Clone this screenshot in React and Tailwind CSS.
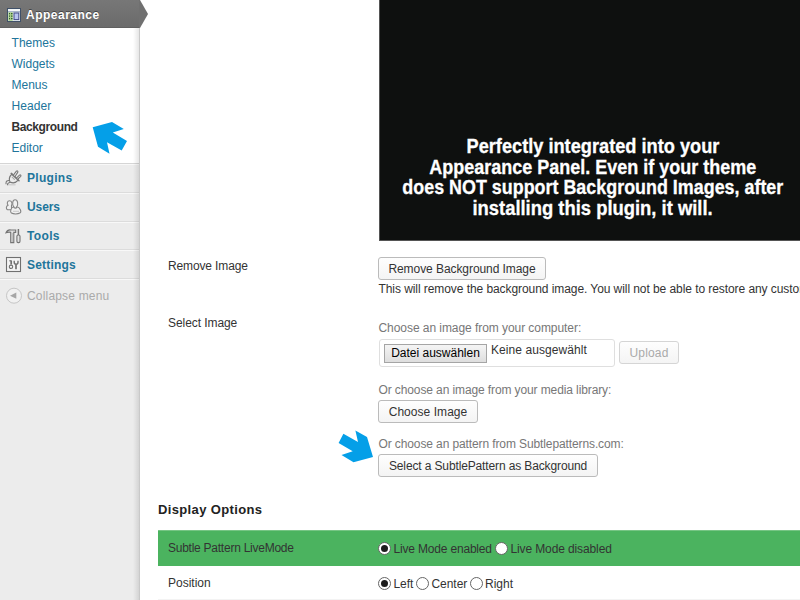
import React from "react";

const FONT = "font-['Liberation_Sans',Arial,sans-serif]";

function AppearanceIcon() {
  return (
    <svg width="16" height="16" viewBox="0 0 16 16" className="block">
      <rect x="1.5" y="1.5" width="13" height="13" fill="#e6edf0" stroke="#3f5068" />
      <path d="M2 3.2h12" stroke="#f6f8f9" strokeWidth="2" />
      <path d="M2 4.8h12" stroke="#8b9cb8" strokeWidth="1" />
      <rect x="2.3" y="5.3" width="4.4" height="8.5" fill="#a9cf8a" />
      <path d="M3 6.7h1m1 0h1.5M3 9.2h1m1 0h1.5M3 11.7h1m1 0h1.5" stroke="#35602f" strokeWidth="1.3" />
      <rect x="8" y="6" width="4.8" height="6.6" fill="#b9c5ef" stroke="#454d8a" />
    </svg>
  );
}

function PluginIcon() {
  return (
    <svg width="18" height="18" viewBox="0 0 18 18" className="block" fill="none" stroke="#787878" strokeWidth="1.1" strokeLinecap="round" strokeLinejoin="round">
      <path d="M3 15.8h7" stroke="#d2d2d2" strokeWidth="1.6" />
      <path d="M1 14.6c-.2-2.6 1.4-3.3 3.4-3.1M2.4 15.8c0-1.8 1-2.2 3-2.6" />
      <path d="M5 13c-1.3-2.8-.6-5.6 2-8l6.2 6.2c-2.2 2.6-5.2 3.3-8.2 1.8z" fill="#ececec" />
      <path d="M6.2 4.4l7.8 7.4" strokeWidth="1.5" />
      <path d="M8.6 5.8l2.8-3.6c.9-.8 2 .1 1.3 1.2l-2.5 3.8M11.6 8.8l2.9-2.7c.9-.7 1.9.3 1.2 1.2l-2.8 2.7" fill="#f6f6f6" />
      <path d="M7.2 8.2l2.2 2.2" stroke="#aaa" />
    </svg>
  );
}

function UsersIcon() {
  return (
    <svg width="18" height="18" viewBox="0 0 18 18" className="block" fill="#f1f1f1" stroke="#858585" strokeWidth="1.1">
      <path d="M6.5 7.4C7.7 5.7 6.8 2.8 4.5 2.8S1.7 5.6 3 7.2C1 8 .8 11.2 2.5 11.8h4z" />
      <path d="M8.8 8.8C6.9 6.5 7.4 1.8 10.1 1.8s3.4 4.6 1.6 7c3.6.6 5.1 5.3 3.2 6.3-2.1 1.1-6.5 1.1-8.5 0-1.5-1-.8-5.6 2.4-6.3z" />
      <path d="M8.6 9c.6 1.5 2.8 1.5 3.3 0" fill="none" />
      <path d="M8 13.3h6" stroke="#ccc" />
    </svg>
  );
}

function ToolsIcon() {
  return (
    <svg width="18" height="18" viewBox="0 0 18 18" className="block" fill="#e2e2e2" stroke="#747474" strokeWidth="1.1">
      <path d="M1 5.8c1.3-2.9 3.2-3.2 5-2.8h4.7v2.4H8.8v10.2H5.7V5.4C4 4.9 2.5 5.2 1 5.8z" />
      <path d="M13.4 2v6" strokeWidth="1.5" />
      <rect x="11.9" y="8" width="3.1" height="7.6" rx="1.3" />
      <path d="M7.2 6v9" stroke="#b4b4b4" />
    </svg>
  );
}

function SettingsIcon() {
  return (
    <svg width="18" height="18" viewBox="0 0 18 18" className="block" fill="none" stroke="#707070" strokeWidth="1.1">
      <rect x="1.5" y="1.5" width="14" height="14" fill="#f4f4f4" />
      <path d="M6.2 4.5v4M11 8.6v4.6" strokeWidth="1.7" />
      <circle cx="6" cy="10.8" r="1.7" />
      <path d="M9.2 4.8v1.4c0 2.7 3.8 2.7 3.8 0V4.8" strokeWidth="1.4" />
      <path d="M4.3 4.8h2" />
    </svg>
  );
}

function CollapseIcon() {
  return (
    <svg width="18" height="18" viewBox="0 0 18 18" className="block">
      <circle cx="9" cy="8.7" r="7.5" fill="#f1f1f1" stroke="#c6c6c6" />
      <path d="M11.3 5.6v6.2L5 8.7z" fill="#a6a6a6" />
    </svg>
  );
}

function MenuRow({ icon, label, tracking }) {
  return (
    <div className="box-border flex h-[28.8px] items-center border-b border-b-[#dcdcdc] border-t border-t-[#f8f8f8] pl-[5px]">
      {icon}
      <span className={`ml-[4px] whitespace-nowrap text-[12px] font-bold text-[#21759b] ${tracking}`}>{label}</span>
    </div>
  );
}

function Button({ children, className }) {
  return (
    <button
      className={`box-border flex items-center justify-center whitespace-nowrap rounded-[3px] border bg-gradient-to-b from-[#fefefe] to-[#f4f4f4] p-0 text-[12px] ${className}`}
    >
      {children}
    </button>
  );
}

function Radio({ checked }) {
  return (
    <span className="flex size-[13px] shrink-0 items-center justify-center rounded-full border border-[#666] bg-white">
      {checked && <span className="size-[7px] rounded-full bg-[#1c1c1c]" />}
    </span>
  );
}

const submenu = [
  { label: "Themes", style: "text-[#21759b] tracking-[0.05px]" },
  { label: "Widgets", style: "text-[#21759b] tracking-[0px]" },
  { label: "Menus", style: "text-[#21759b] tracking-[0px]" },
  { label: "Header", style: "text-[#21759b] tracking-[0.1px]" },
  { label: "Background", style: "font-bold text-[#333] tracking-[-0.4px]" },
  { label: "Editor", style: "text-[#21759b] tracking-[0px]" },
];

export default function App() {
  return (
    <div className={`relative flex h-[600px] w-[800px] overflow-hidden bg-white text-[12px] leading-[16px] text-[#333] ${FONT}`}>
      <aside className="relative box-border h-[600px] w-[140px] shrink-0 border-r border-[#c9c9c9] bg-[#ececec]">
        <div className="flex h-[28px] items-center border-b border-[#606060] bg-gradient-to-b from-[#777] to-[#6b6b6b] pl-[6px] pt-[2px]">
          <AppearanceIcon />
          <span className="ml-[4px] text-[12px] font-bold tracking-[0.5px] text-white [text-shadow:0_-1px_0_#444]">Appearance</span>
        </div>
        <svg className="absolute left-[139px] top-0 z-10" width="10" height="29" viewBox="0 0 10 29">
          <path d="M0 0h1l8 14-8 14H0z" fill="#707070" />
        </svg>
        <nav className="box-border flex h-[135px] flex-col bg-white pl-[11.5px] pt-[5px]">
          {submenu.map((item) => (
            <span key={item.label} className={`h-[21px] shrink-0 leading-[21px] ${item.style}`}>{item.label}</span>
          ))}
        </nav>
        <div className="h-[1px] bg-[#d5d5d5]" />
        <MenuRow icon={<PluginIcon />} label="Plugins" tracking="tracking-[0.3px]" />
        <MenuRow icon={<UsersIcon />} label="Users" tracking="tracking-[-0.1px]" />
        <MenuRow icon={<ToolsIcon />} label="Tools" tracking="tracking-[0.35px]" />
        <MenuRow icon={<SettingsIcon />} label="Settings" tracking="tracking-[0.2px]" />
        <div className="flex h-[33px] items-center border-t border-[#f8f8f8] pl-[5px]">
          <CollapseIcon />
          <span className="ml-[4px] whitespace-nowrap tracking-[0.18px] text-[#aaa]">Collapse menu</span>
        </div>
        <div className="pointer-events-none absolute bottom-0 right-0 top-[28px] w-[6px] bg-gradient-to-r from-transparent to-black/10" />
      </aside>

      <main className="flex w-[660px] shrink-0 flex-col pl-[18px]">
        <section className="flex h-[241px] shrink-0 pl-[221px]">
          <div className="box-border flex w-[430px] shrink-0 flex-col border-b border-l border-[#555] bg-[#0e100f] pt-[136px] text-[20px] font-bold leading-[20.7px] text-white [-webkit-text-stroke:0.3px_white]">
            <div className="flex w-[426px] flex-col items-center whitespace-nowrap">
              <span className="origin-center scale-x-[0.91]">Perfectly integrated into your</span>
              <span className="origin-center scale-x-[0.9]">Appearance Panel. Even if your theme</span>
              <span className="origin-center scale-x-[0.895]">does NOT support Background Images, after</span>
              <span className="origin-center scale-x-[0.92]">installing this plugin, it will.</span>
            </div>
          </div>
        </section>

        <section className="flex h-[68px] shrink-0 pl-[10px]">
          <div className="w-[210px] shrink-0 pt-[17px] tracking-[-0.13px]">Remove Image</div>
          <div className="flex w-[432px] shrink-0 flex-col pt-[16px]">
            <Button className="h-[23px] w-[168px] border-[#bbb] text-[#333] tracking-[-0.07px]">Remove Background Image</Button>
            <span className="whitespace-nowrap pl-[0.5px] pt-[1px] tracking-[-0.07px]">This will remove the background image. You will not be able to restore any custom</span>
          </div>
        </section>

        <section className="flex h-[185px] shrink-0 pl-[10px]">
          <div className="w-[210px] shrink-0 pt-[6px] tracking-[-0.07px]">Select Image</div>
          <div className="flex w-[432px] shrink-0 flex-col pt-[11px]">
            <span className="pl-[0.5px] tracking-[-0.06px] text-[#777]">Choose an image from your computer:</span>
            <div className="mt-[3px] flex h-[28px] items-center">
              <div className="ml-[1px] box-border flex h-[28px] w-[236px] items-start rounded-[3px] border border-[#dfdfdf] pl-[4px] pt-[4px]">
                <button className="box-border h-[19px] w-[103px] whitespace-nowrap border border-[#a5a5a5] bg-gradient-to-b from-[#f5f5f5] to-[#dedede] p-0 leading-[17px] tracking-[0px] text-black">Datei auswählen</button>
                <span className="ml-[4px] mt-[-2px] whitespace-nowrap tracking-[0.07px]">Keine ausgewählt</span>
              </div>
              <Button className="mb-[1px] ml-[4px] h-[23px] w-[60px] border-[#d5d5d5] text-[#aaa] tracking-[0.15px]">Upload</Button>
            </div>
            <span className="mt-[15px] h-[18px] pl-[0.5px] tracking-[-0.11px] text-[#777]">Or choose an image from your media library:</span>
            <Button className="h-[23px] w-[100px] border-[#bbb] text-[#333] tracking-[0.05px]">Choose Image</Button>
            <span className="mt-[13px] h-[18px] pl-[0.5px] tracking-[-0.11px] text-[#777]">Or choose an pattern from Subtlepatterns.com:</span>
            <Button className="h-[23px] w-[220px] border-[#bbb] text-[#333] tracking-[-0.13px]">Select a SubtlePattern as Background</Button>
          </div>
        </section>

        <h2 className="h-[36px] shrink-0 pt-[7px] text-[13px] font-bold leading-[18px] tracking-[0.36px] text-[#222]">Display Options</h2>

        <section className="box-border flex h-[36px] shrink-0 items-center border-t border-[#76c584] bg-[#4bb35f] pl-[10px]">
          <div className="w-[210px] shrink-0 pb-[2px] tracking-[-0.25px]">Subtle Pattern LiveMode</div>
          <div className="flex items-center whitespace-nowrap">
            <Radio checked />
            <span className="ml-[2.5px] w-[101.5px] tracking-[-0.18px]">Live Mode enabled</span>
            <Radio />
            <span className="ml-[2.5px] tracking-[-0.12px]">Live Mode disabled</span>
          </div>
        </section>
        <section className="box-border flex h-[34px] shrink-0 items-center border-b border-[#f3f3f3] pl-[10px] pt-[2px]">
          <div className="w-[210px] shrink-0 pb-[2px] tracking-[0px]">Position</div>
          <div className="flex items-center whitespace-nowrap">
            <Radio checked />
            <span className="ml-[2.5px] w-[22.5px] tracking-[-0.05px]">Left</span>
            <Radio />
            <span className="ml-[2.5px] w-[38.5px] tracking-[-0.05px]">Center</span>
            <Radio />
            <span className="ml-[2px] tracking-[0px]">Right</span>
          </div>
        </section>
      </main>

      <svg className="absolute left-[92px] top-[121px]" width="36" height="34" viewBox="0 0 36 34">
        <path d="M.7 6.2L20 1l11.8 7-11 3.6L35 20l-5.3 9.5L15 21.3l2.5 11.4L6 25.8z" fill="#049fe8" />
      </svg>
      <svg className="absolute left-[338px] top-[429px]" width="36" height="34" viewBox="0 0 36 34">
        <path d="M5.4 4.8L20 13l-2.6-11.5L29 8l6 20-19.5 5.3L3.5 26l11.2-3.7L.6 14z" fill="#049fe8" />
      </svg>
    </div>
  );
}
